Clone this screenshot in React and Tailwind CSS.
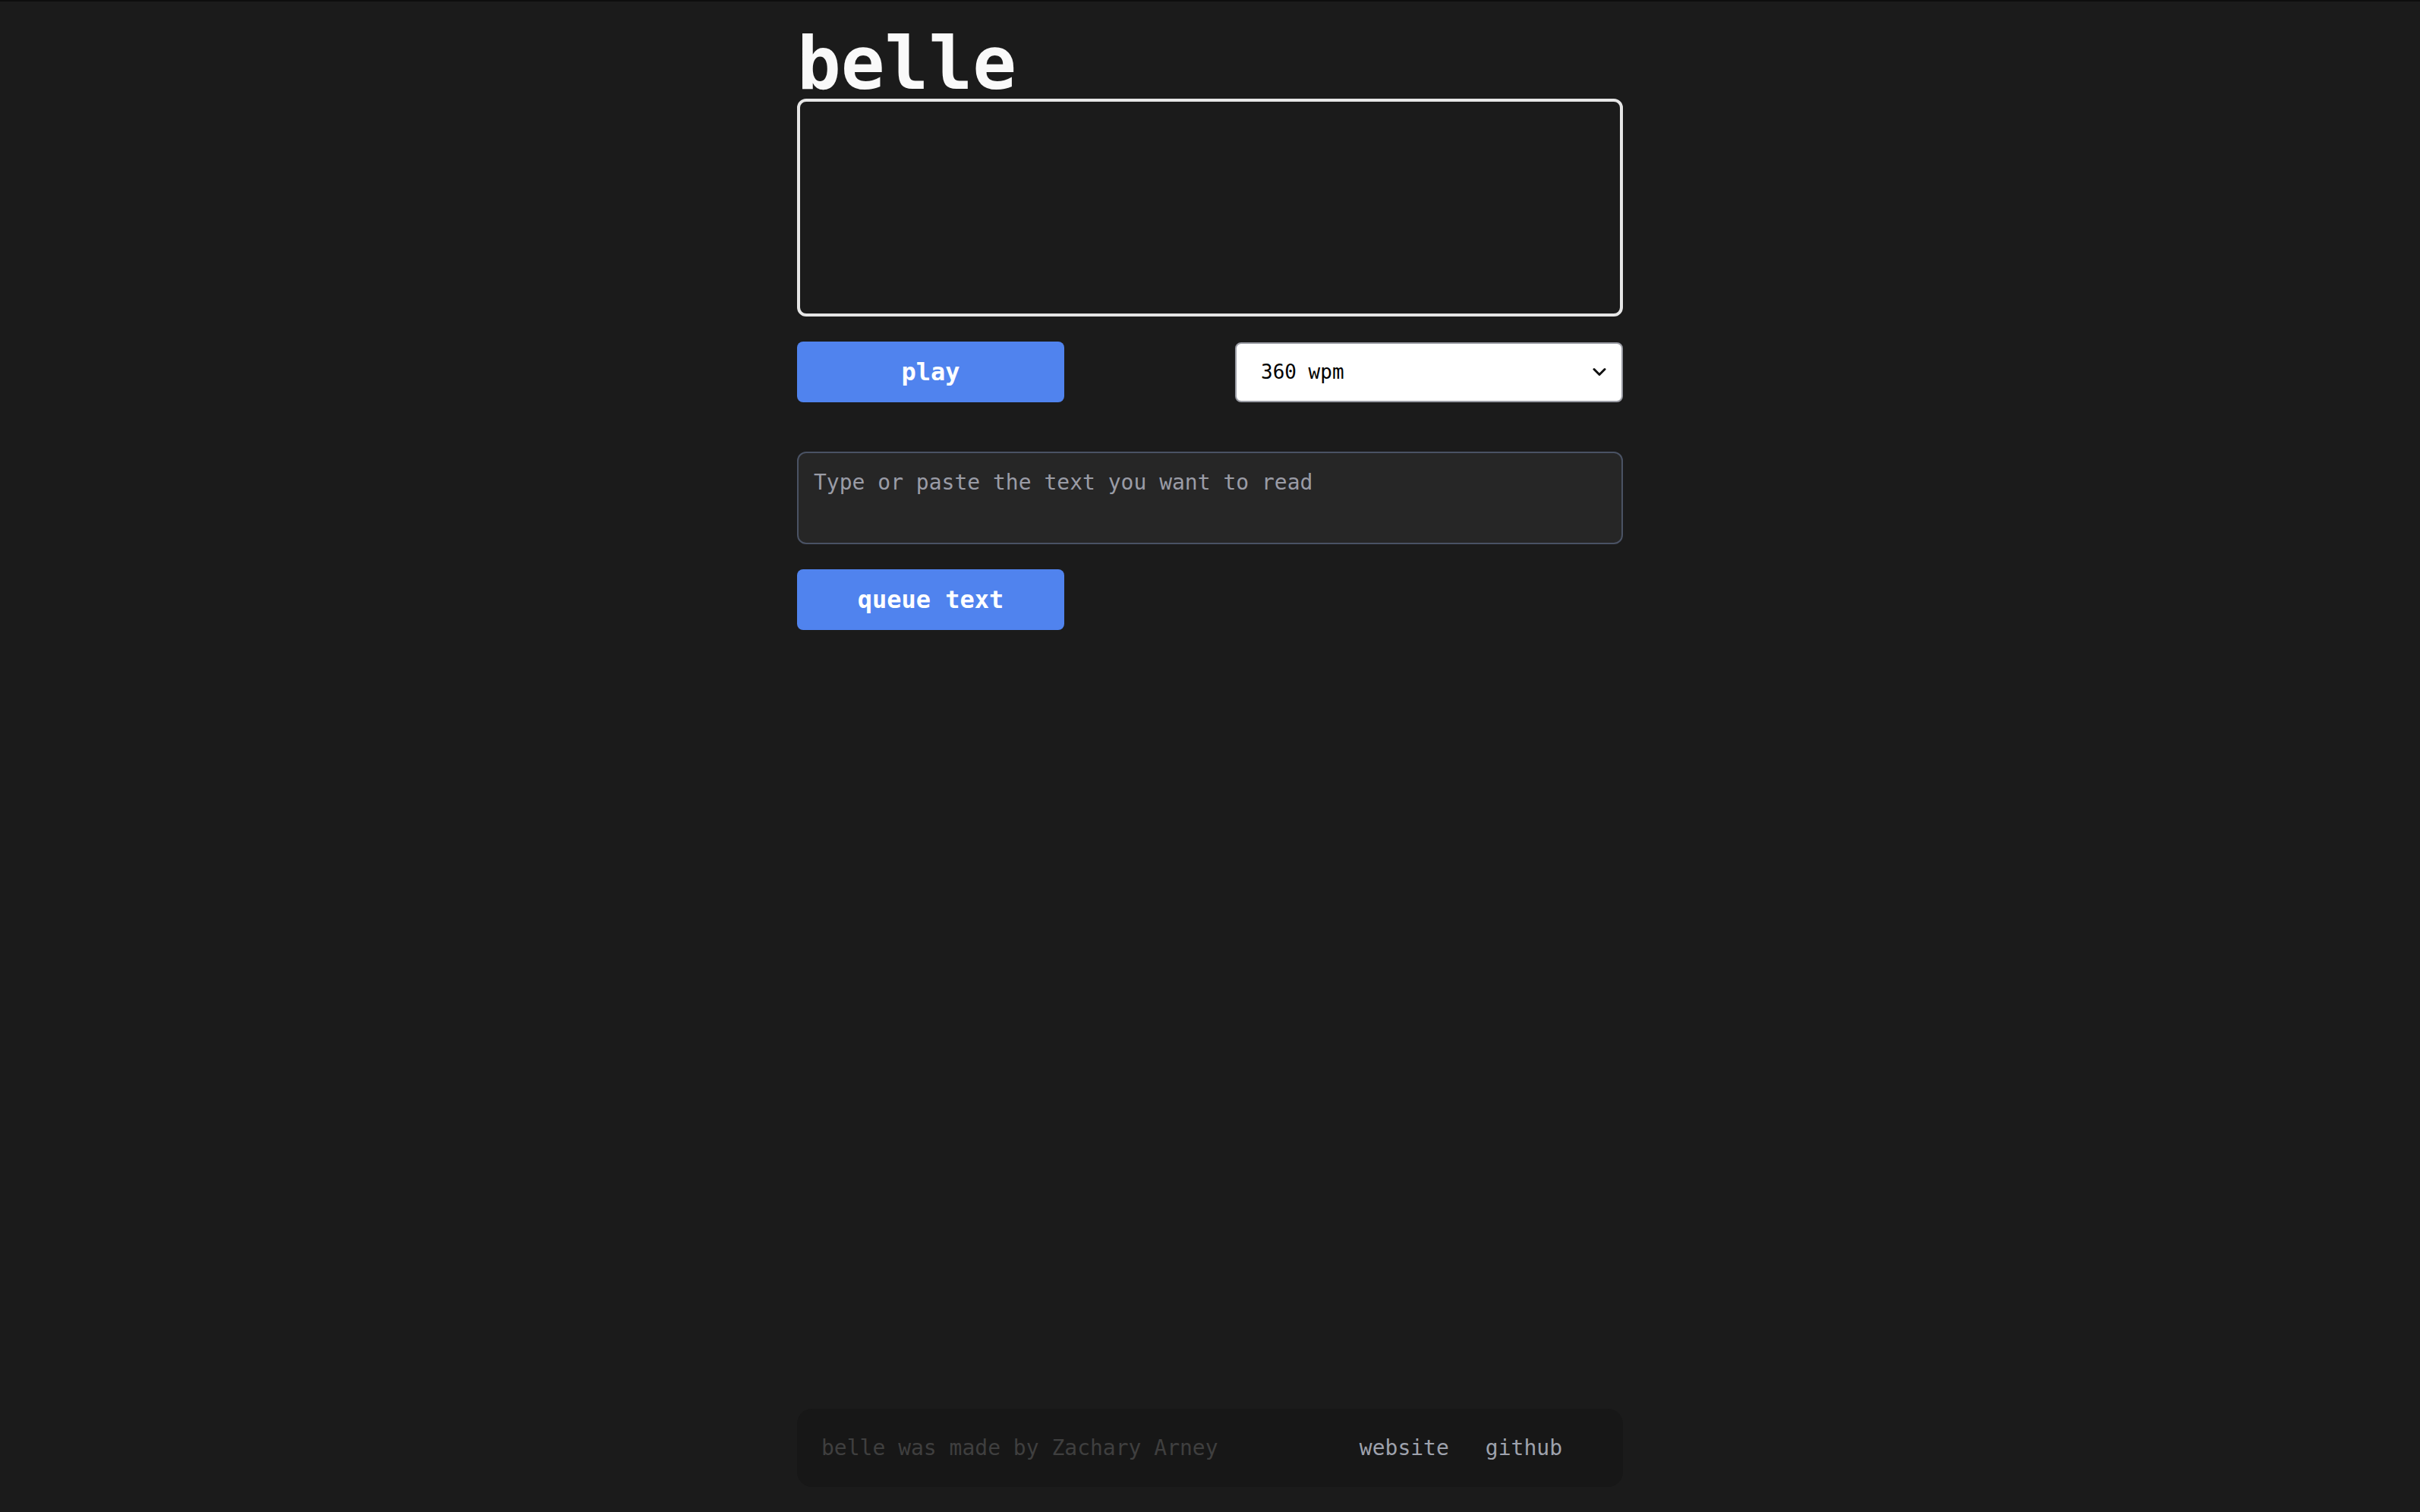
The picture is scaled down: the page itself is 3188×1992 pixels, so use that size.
import { useState } from 'react';

export default function App() {
  const [wpm, setWpm] = useState('360');
  const [text, setText] = useState('');

  return (
    <div className="min-h-screen flex flex-col bg-[#1b1b1b] border-t-2 border-[#0e0e0e] font-['DejaVu_Sans_Mono',monospace]">
      <main className="w-full max-w-[1088px] mx-auto pt-[36px]">
        <h1 className="text-[96px] leading-[92px] font-bold text-[#f9f9f9]">belle</h1>

        <div className="h-[287px] border-[4px] border-[#e6e6e6] rounded-[12px] bg-[#1b1b1b]" />

        <div className="mt-[33px] flex items-center justify-between">
          <button
            type="button"
            className="w-[352px] h-[80px] rounded-[8px] bg-[#5083ee] text-white text-[32px] font-bold"
          >
            play
          </button>
          <div className="relative w-[511px]">
            <select
              value={wpm}
              onChange={(e) => setWpm(e.target.value)}
              className="appearance-none w-full h-[79px] rounded-[8px] border-2 border-[#9a9ca4] bg-white text-black text-[26px] pl-[32px] pr-[60px] font-['DejaVu_Sans_Mono',monospace]"
            >
              <option value="240">240 wpm</option>
              <option value="300">300 wpm</option>
              <option value="360">360 wpm</option>
              <option value="420">420 wpm</option>
              <option value="480">480 wpm</option>
            </select>
            <svg
              className="pointer-events-none absolute right-[22px] top-1/2 -translate-y-1/2"
              width="18"
              height="12"
              viewBox="0 0 18 12"
              fill="none"
            >
              <path d="M2 2.5l7 7 7-7" stroke="#111" strokeWidth="3" strokeLinecap="round" strokeLinejoin="round" />
            </svg>
          </div>
        </div>

        <textarea
          value={text}
          onChange={(e) => setText(e.target.value)}
          placeholder="Type or paste the text you want to read"
          className="mt-[65px] block w-full h-[122px] resize-none rounded-[12px] border-2 border-[#4a5264] bg-[#262626] px-[20px] pt-[18px] text-[28px] leading-[42px] text-[#e5e5e5] placeholder:text-[#9a9ca6] outline-none font-['DejaVu_Sans_Mono',monospace]"
        />

        <button
          type="button"
          className="mt-[33px] w-[352px] h-[80px] rounded-[8px] bg-[#5083ee] text-white text-[32px] font-bold"
        >
          queue text
        </button>
      </main>

      <footer className="mt-auto mb-[33px] w-full max-w-[1088px] mx-auto h-[103px] rounded-[20px] bg-[#171717] flex items-center justify-between pl-[32px] pr-[80px] text-[28px]">
        <span className="text-[#3f3f3f]">belle was made by Zachary Arney</span>
        <nav className="flex items-center gap-[48px] text-[#9ea2ad]">
          <a href="#">website</a>
          <a href="#">github</a>
        </nav>
      </footer>
    </div>
  );
}
